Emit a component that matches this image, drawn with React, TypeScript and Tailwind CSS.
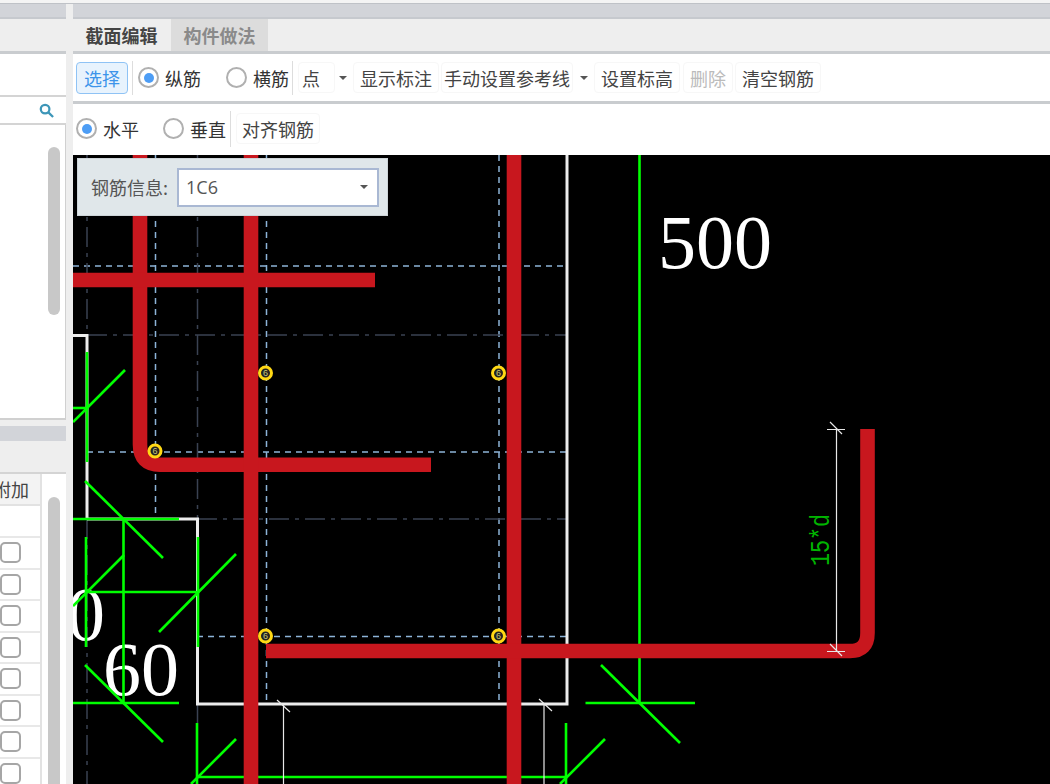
import type { ReactNode } from "react";

const FONT = { fontFamily: '"Noto Sans CJK SC", "Liberation Sans", sans-serif' };

const RED = "#c8171e";
const GREEN = "#00ff00";
const WHITE = "#ececec";
const BLUE_DASH = "#8db4d8";
const DARK_DASH = "#3a4252";

const greenLines = [
  [87, 352, 87, 462], [125, 370, 73, 422], [73, 408, 87, 408],
  [85, 481, 163, 558], [73, 519, 179, 519], [123.5, 519, 123.5, 703],
  [124, 555, 73, 606], [86, 537, 86, 647], [87, 592, 198, 592],
  [236, 554, 159, 632], [198, 537, 198, 647], [85, 665, 163, 742],
  [73, 703, 179, 703], [197, 723, 197, 784], [236, 739, 191, 784],
  [197, 777, 566, 777], [639.5, 155, 639.5, 703], [585.5, 703, 695, 703],
  [601, 665, 680, 743], [566, 723, 566, 784], [605, 739, 560, 784],
];

const blueDashes = [
  [73, 266, 567, 266], [87, 452, 567, 452], [197, 636.5, 567, 636.5],
  [155.5, 155, 155.5, 519], [266.5, 155, 266.5, 704], [499, 155, 499, 704],
];

const darkDashes = [
  [87, 155, 87, 335], [87, 519, 87, 784], [197.5, 155, 197.5, 519],
  [197.5, 705, 197.5, 723], [87, 335, 567, 335], [197, 519, 567, 519],
];

const markers = [
  [265.5, 373], [498.5, 373], [155, 451], [265.5, 636], [498.5, 636],
];

function Radio({ checked, label, gap }: { checked?: boolean; label: string; gap: string }) {
  return (
    <div className={`flex items-center ${gap}`}>
      <span className="flex h-[21px] w-[21px] items-center justify-center rounded-full border-2 border-[#b0b0b0] bg-white">
        {checked && <span className="h-[10px] w-[10px] rounded-full bg-[#4d9df5]" />}
      </span>
      <span className="text-[18px] leading-none text-[#333]">{label}</span>
    </div>
  );
}

function ToolBtn({ children, muted, className }: { children: ReactNode; muted?: boolean; className: string }) {
  return (
    <div
      className={`flex h-[31px] items-center justify-center rounded border border-[#f7f7f7] text-[18px] leading-none ${
        muted ? "text-[#bbb]" : "text-[#444]"
      } ${className}`}
    >
      {children}
    </div>
  );
}

function Caret({ className }: { className: string }) {
  return <span className={`h-0 w-0 border-x-[4px] border-t-[4px] border-x-transparent border-t-[#555] ${className}`} />;
}

function Canvas() {
  return (
    <svg viewBox="73 155 977 629" className="block h-full w-full bg-black">
      <g fill="none" stroke={BLUE_DASH} strokeWidth="1.5" strokeDasharray="6 5">
        {blueDashes.map(([x1, y1, x2, y2]) => (
          <line key={`${x1}-${y1}-${x2}`} x1={x1} y1={y1} x2={x2} y2={y2} />
        ))}
      </g>
      <g fill="none" stroke={DARK_DASH} strokeWidth="1.5" strokeDasharray="20 6 4 6">
        {darkDashes.map(([x1, y1, x2, y2]) => (
          <line key={`${x1}-${y1}-${x2}`} x1={x1} y1={y1} x2={x2} y2={y2} />
        ))}
      </g>

      <path
        d="M73 335.5H87V519M87 519H197.5V704H567V155"
        fill="none"
        stroke={WHITE}
        strokeWidth="3"
      />

      <text x="658" y="268" fontFamily='"Liberation Serif", serif' fontSize="76" fill="#fff">500</text>
      <text x="103" y="695" fontFamily='"Liberation Serif", serif' fontSize="76" fill="#fff">60</text>
      <text x="67" y="640" fontFamily='"Liberation Serif", serif' fontSize="76" fill="#fff">0</text>

      <g stroke={GREEN} strokeWidth="2.6" fill="none">
        {greenLines.map(([x1, y1, x2, y2]) => (
          <line key={`${x1}-${y1}-${x2}`} x1={x1} y1={y1} x2={x2} y2={y2} />
        ))}
      </g>

      <g stroke={RED} strokeWidth="14.6" fill="none">
        <path d="M140 155V444.5Q140 464.7 160 464.7H431" />
        <path d="M73 280H375" />
        <path d="M251 155V784" />
        <path d="M514 155V784" />
        <path d="M266 651H850Q867.5 651 867.5 633V429" />
      </g>

      <g stroke="#e8e8e8" strokeWidth="1.2" fill="none">
        <path d="M836.5 430V651M827 429.5H845M830 422L842 434M827 651.5H845M830 644L842 656" />
        <path d="M283.5 705V784M277 700L290 712" />
        <path d="M544 705V784M539 699L552 711" />
      </g>

      <text
        transform="translate(829 566) rotate(-90)"
        fontFamily='"Liberation Mono", monospace'
        fontSize="27"
        textLength="52"
        lengthAdjust="spacingAndGlyphs"
        fill="#00b400"
      >
        15*d
      </text>

      {markers.map(([cx, cy]) => (
        <g key={`${cx}-${cy}`}>
          <circle cx={cx} cy={cy} r="6" fill="#222" stroke="#ffd814" strokeWidth="3" />
          <text x={cx} y={cy + 3} textAnchor="middle" fontSize="9" fontFamily='"Liberation Sans", sans-serif' fill="#c8c878">
            6
          </text>
        </g>
      ))}
    </svg>
  );
}

function LeftPanel() {
  return (
    <aside className="flex w-[66px] flex-col overflow-hidden">
      <div className="h-[15px] border-b-2 border-[#c6c9ce] bg-[#d2d4d9]" />
      <div className="h-[35px] border-b-[3px] border-[#c9cccf] bg-[#eeeeee]" />
      <div className="h-[41px] bg-white" />
      <div className="flex h-[30px] items-center justify-end border-y-2 border-[#d4d4d4] bg-white pr-[12px]">
        <svg viewBox="0 0 16 16" className="h-[15px] w-[15px]" fill="none" stroke="#3d96b8" strokeWidth="2.4">
          <circle cx="6.5" cy="6.5" r="4.6" />
          <path d="M10 10L15 15" />
        </svg>
      </div>
      <div className="h-[295px] border-r border-b-2 border-[#d0d0d0] bg-white pt-[22px] pl-[48px]">
        <div className="h-[168px] w-[12px] rounded-full bg-[#c8c8c8]" />
      </div>

      <div className="h-[6px] bg-[#eeeeee]" />
      <div className="h-[15px] bg-[#d2d4d9]" />
      <div className="h-[33px] border-b-2 border-[#d4d4d4] bg-[#eeeeee]" />
      <div className="flex flex-1 overflow-hidden bg-white">
        <div className="w-[42px] shrink-0 border-r-2 border-[#e2e2e2]">
          <div className="flex h-[32px] items-center justify-end border-b-2 border-[#e2e2e2] bg-[#f3f3f3] pr-[11px]">
            <span className="text-[18px] leading-none whitespace-nowrap text-[#444]">附加</span>
          </div>
          <div className="h-[32px] border-b-2 border-[#e8e8e8]" />
          {[0, 1, 2, 3, 4, 5, 6, 7].map((row) => (
            <div key={row} className="flex h-[31.5px] items-center border-b-2 border-[#e8e8e8]">
              <span className="h-[21px] w-[21px] rounded-[5px] border-2 border-[#a6a6a6] bg-white" />
            </div>
          ))}
        </div>
        <div className="pt-[23px] pl-[6px]">
          <div className="h-[300px] w-[12px] rounded-full bg-[#c8c8c8]" />
        </div>
      </div>
    </aside>
  );
}

export default function App() {
  return (
    <div className="flex h-[784px] w-[1050px] flex-col overflow-hidden bg-white" style={FONT}>
      <div className="h-[4px] border-b border-[#bfc2c7] bg-[#f4f4f4]" />
      <div className="flex min-h-0 flex-1">
        <LeftPanel />
        <div className="w-[7px] bg-[#eeeeee]" />

        <main className="flex min-w-0 flex-1 flex-col">
          <div className="h-[15px] border-b-2 border-[#c6c9ce] bg-[#d2d4d9]" />
          <div className="flex h-[35px] border-b-[3px] border-[#c9cccf] bg-[#eeeeee]">
            <div className="flex w-[97px] items-center justify-center text-[18px] leading-none font-bold text-[#444]">
              截面编辑
            </div>
            <div className="ml-px flex w-[97px] items-center justify-center bg-[#dcdcdc] text-[18px] leading-none font-bold text-[#8a8a8a]">
              构件做法
            </div>
          </div>

          <div className="flex h-[50px] items-center border-b-[3px] border-[#c9cccf] pl-[3px]">
            <div className="flex h-[32px] w-[52px] items-center justify-center rounded border border-[#8fc3f5] bg-[#e8f3fd] text-[18px] leading-none text-[#3d94ea]">
              选择
            </div>
            <div className="ml-[4px] h-[34px] w-px bg-[#ddd]" />
            <div className="ml-[5px]"><Radio checked label="纵筋" gap="gap-[6px]" /></div>
            <div className="ml-[25px]"><Radio label="横筋" gap="gap-[6px]" /></div>
            <div className="ml-[3px] h-[34px] w-px bg-[#ddd]" />
            <ToolBtn className="ml-[5px] w-[37px] justify-start pl-[3px]">点</ToolBtn>
            <Caret className="ml-[4px]" />
            <ToolBtn className="ml-[6px] w-[86px]">显示标注</ToolBtn>
            <ToolBtn className="ml-[2px] w-[132px]">手动设置参考线</ToolBtn>
            <Caret className="ml-[7px]" />
            <ToolBtn className="ml-[6px] w-[86px]">设置标高</ToolBtn>
            <ToolBtn muted className="ml-[3px] w-[50px]">删除</ToolBtn>
            <ToolBtn className="ml-[2px] w-[86px]">清空钢筋</ToolBtn>
          </div>

          <div className="flex h-[51px] items-center pb-[2px] pl-[3px]">
            <Radio checked label="水平" gap="gap-[6px]" />
            <div className="ml-[24px]"><Radio label="垂直" gap="gap-[6px]" /></div>
            <div className="ml-[4px] h-[36px] w-px bg-[#ddd]" />
            <ToolBtn className="ml-[5px] w-[84px]">对齐钢筋</ToolBtn>
          </div>

          <div className="relative min-h-0 flex-1">
            <Canvas />
            <div className="absolute top-[3px] left-[4px] flex h-[58px] w-[311px] items-center border border-[#cdd4d8] bg-[#e0e7ea] pl-[13px]">
              <span className="w-[86px] shrink-0 text-[18px] leading-none whitespace-nowrap text-[#555]">钢筋信息:</span>
              <div className="flex h-[39px] w-[202px] items-center justify-between border-2 border-[#a9b8d3] bg-white pr-[9px] pl-[7px] text-[18px] text-[#555]">
                <span style={{ fontFamily: '"Open Sans", sans-serif' }}>1C6</span>
                <Caret className="" />
              </div>
            </div>
          </div>
        </main>
      </div>
    </div>
  );
}
